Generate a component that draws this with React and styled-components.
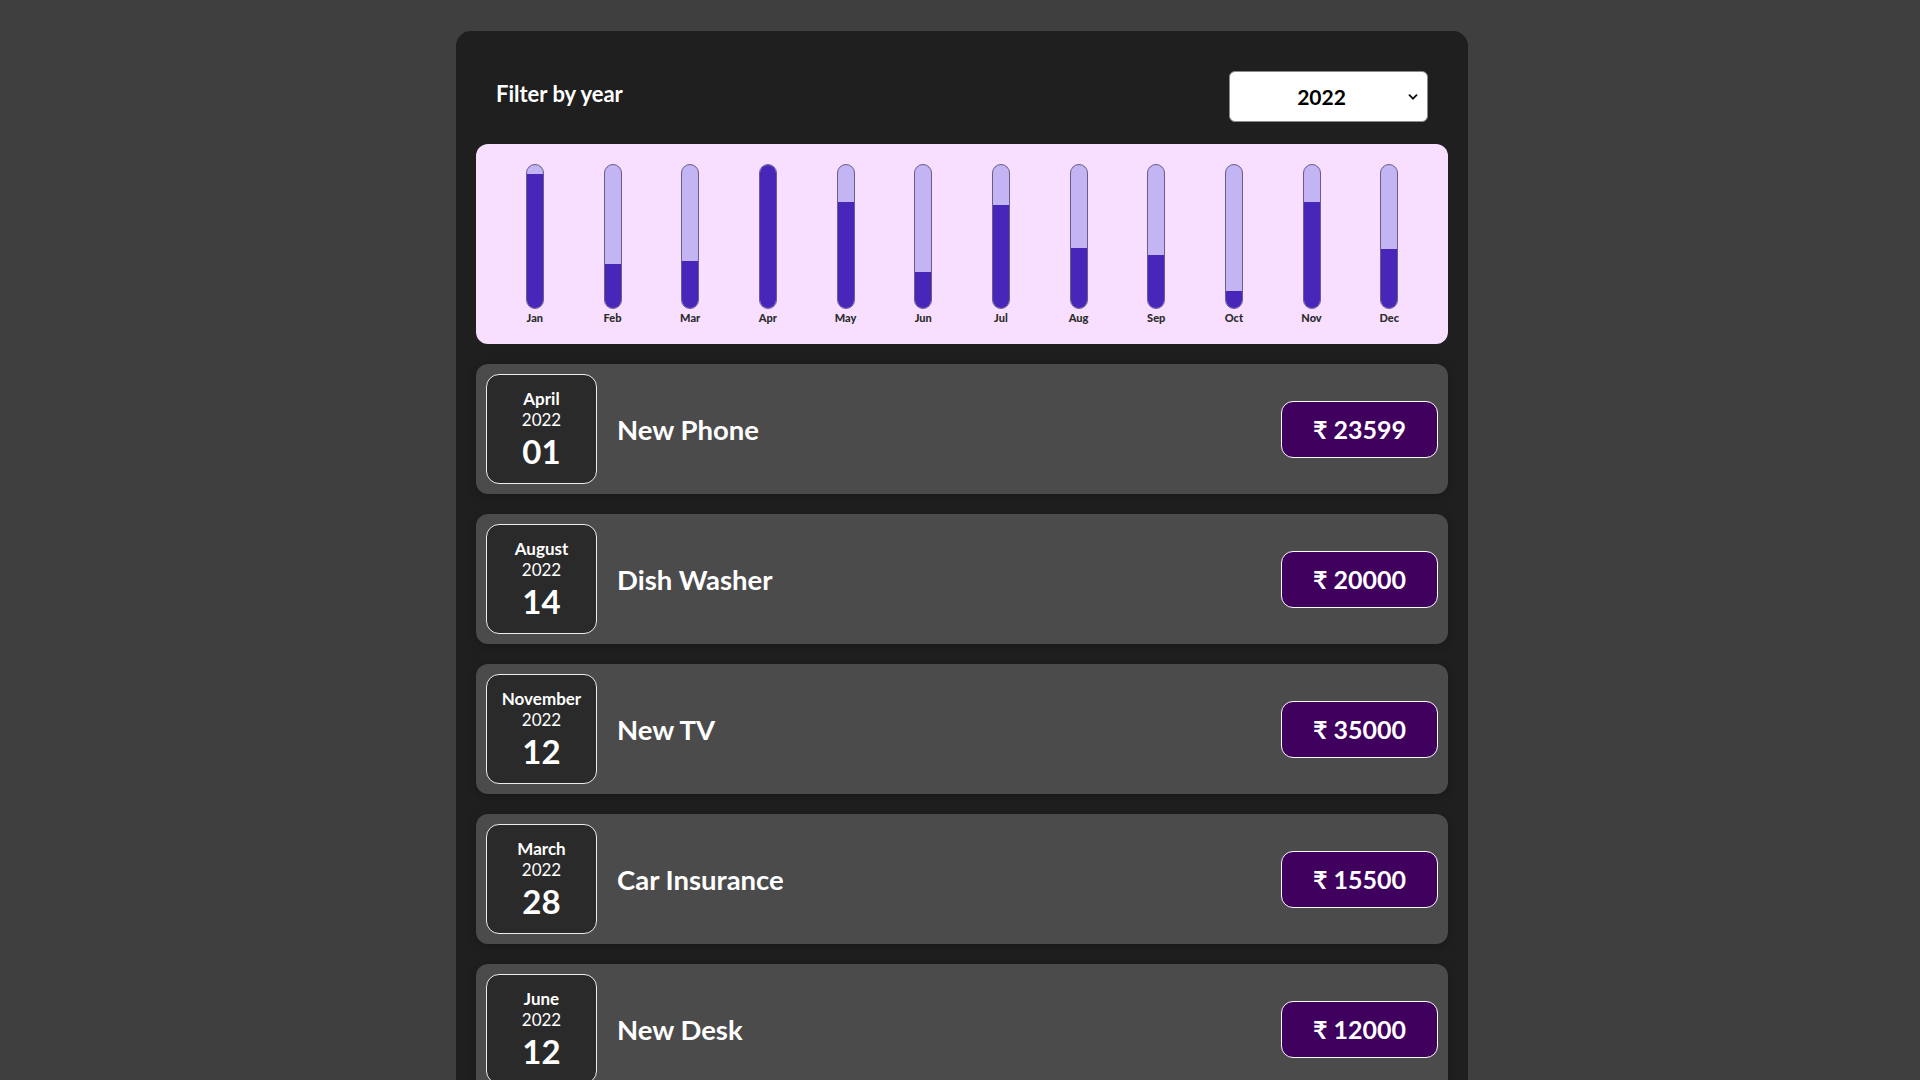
import React from "react";
import styled, { createGlobalStyle } from "styled-components";

const GlobalStyle = createGlobalStyle`
  * { box-sizing: border-box; }
  body {
    margin: 0;
    background-color: #3f3f3f;
    font-family: "Lato", "Noto Sans", "DejaVu Sans", sans-serif;
  }
`;

const months = ["Jan", "Feb", "Mar", "Apr", "May", "Jun", "Jul", "Aug", "Sep", "Oct", "Nov", "Dec"];
const chartValues = [0.94, 0.31, 0.33, 1, 0.74, 0.25, 0.72, 0.42, 0.37, 0.12, 0.74, 0.41];

const expenses = [
  { month: "April", year: 2022, day: "01", title: "New Phone", amount: 23599 },
  { month: "August", year: 2022, day: "14", title: "Dish Washer", amount: 20000 },
  { month: "November", year: 2022, day: "12", title: "New TV", amount: 35000 },
  { month: "March", year: 2022, day: "28", title: "Car Insurance", amount: 15500 },
  { month: "June", year: 2022, day: "12", title: "New Desk", amount: 12000 },
];

const Expenses = styled.div`
  width: 1012px;
  margin: 31px 0 0 calc(50% - 504px);
  padding: 20px 20px 0;
  background-color: #1f1f1f;
  border-radius: 15px 15px 0 0;
`;

const FilterControl = styled.div`
  display: flex;
  align-items: center;
  justify-content: space-between;
  margin: 20px 0 22px;
  padding: 0 20px;
  color: #fff;

  label {
    font-weight: 700;
    font-size: 22px;
    margin-bottom: 6px;
  }
`;

const SelectWrap = styled.div`
  position: relative;
  width: 199px;
  height: 51px;

  svg {
    position: absolute;
    right: 10px;
    top: 50%;
    transform: translateY(-50%);
    pointer-events: none;
  }
`;

const Select = styled.select`
  appearance: none;
  width: 100%;
  height: 100%;
  font: inherit;
  font-size: 21px;
  font-weight: 700;
  text-align: center;
  text-align-last: center;
  color: #000;
  background: #fff;
  border: 1px solid #8a8a8a;
  border-radius: 6px;
  padding: 0 24px 0 10px;
`;

const Chart = styled.div`
  display: flex;
  justify-content: space-around;
  height: 200px;
  padding: 20px 20px 19px;
  background-color: #f8dfff;
  border-radius: 12px;
`;

const BarColumn = styled.div`
  flex: 1;
  height: 100%;
  display: flex;
  flex-direction: column;
  align-items: center;
`;

const BarInner = styled.div`
  flex: 1;
  width: 18px;
  display: flex;
  flex-direction: column;
  justify-content: flex-end;
  overflow: hidden;
  background-color: #c3b4f3;
  border: 1px solid #6a5d86;
  border-radius: 12px;
`;

const BarFill = styled.div`
  width: 100%;
  background-color: #4826b9;
`;

const BarLabel = styled.div`
  margin-top: 2px;
  font-size: 11px;
  font-weight: 900;
  line-height: 14px;
  color: #2b2b2b;
`;

const List = styled.ul`
  list-style: none;
  margin: 0;
  padding: 20px 0 0;
  display: flex;
  flex-direction: column;
  gap: 20px;
`;

const Item = styled.li`
  display: flex;
  align-items: center;
  height: 130px;
  padding: 10px;
  background-color: #4b4b4b;
  border-radius: 12px;
  box-shadow: 0 2px 8px rgba(0, 0, 0, 0.25);
`;

const DateBox = styled.div`
  display: flex;
  flex-direction: column;
  align-items: center;
  justify-content: center;
  width: 111px;
  height: 110px;
  flex-shrink: 0;
  color: #fff;
  background-color: #2a2a2a;
  border: 1px solid #ececec;
  border-radius: 13px;
`;

const Month = styled.div`
  font-size: 17px;
  font-weight: 700;
  line-height: 21px;
`;

const Year = styled.div`
  font-size: 17px;
  line-height: 22px;
`;

const Day = styled.div`
  font-size: 33px;
  font-weight: 700;
  line-height: 40px;
`;

const Title = styled.h2`
  flex: 1;
  margin: 0 20px;
  color: #fff;
  font-size: 27.5px;
  font-weight: 700;
`;

const Price = styled.div`
  display: flex;
  align-items: center;
  height: 57px;
  padding: 0 31px;
  color: #fff;
  font-size: 25px;
  font-weight: 700;
  background-color: #40005d;
  border: 1px solid #fff;
  border-radius: 12px;
`;

const ChartBar = ({ value, label }) => (
  <BarColumn>
    <BarInner>
      <BarFill style={{ height: `${Math.round(value * 100)}%` }} />
    </BarInner>
    <BarLabel>{label}</BarLabel>
  </BarColumn>
);

export default function App() {
  return (
    <>
      <GlobalStyle />
      <Expenses>
        <FilterControl>
          <label>Filter by year</label>
          <SelectWrap>
            <Select defaultValue="2022">
              <option value="2022">2022</option>
              <option value="2021">2021</option>
              <option value="2020">2020</option>
              <option value="2019">2019</option>
            </Select>
            <svg width="10" height="7" viewBox="0 0 10 7">
              <path d="M1 1.2 L5 5.2 L9 1.2" fill="none" stroke="#111" strokeWidth="1.8" />
            </svg>
          </SelectWrap>
        </FilterControl>
        <Chart>
          {months.map((m, i) => (
            <ChartBar key={m} label={m} value={chartValues[i]} />
          ))}
        </Chart>
        <List>
          {expenses.map((e) => (
            <Item key={e.title}>
              <DateBox>
                <Month>{e.month}</Month>
                <Year>{e.year}</Year>
                <Day>{e.day}</Day>
              </DateBox>
              <Title>{e.title}</Title>
              <Price>₹ {e.amount}</Price>
            </Item>
          ))}
        </List>
      </Expenses>
    </>
  );
}
